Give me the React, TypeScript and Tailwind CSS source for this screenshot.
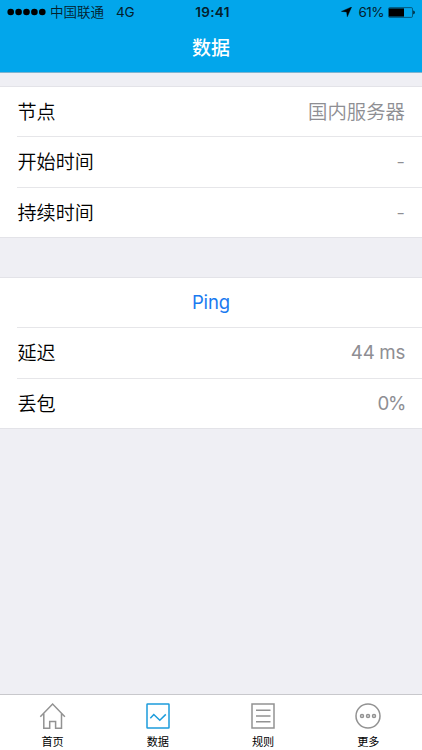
import type { ReactNode } from 'react';

type RowProps = {
  label: string;
  value: string;
  className?: string;
  valueClass?: string;
};

function Row({
  label,
  value,
  className = 'h-[51px] border-b',
  valueClass = 'text-[19.4px] font-[350]',
}: RowProps) {
  return (
    <div className="pl-[17px]">
      <div className={`flex items-center justify-between border-[#e6e6e9] pr-[17px] ${className}`}>
        <span className="pl-[0.5px] text-[19.1px] font-[350] leading-6 text-black">{label}</span>
        <span className={`leading-6 text-[#8e8e93] ${valueClass}`}>{value}</span>
      </div>
    </div>
  );
}

function StatusBar() {
  return (
    <div className="grid h-6 grid-cols-3 items-center text-[13.5px] leading-6 text-[#04202c]">
      <div className="flex items-center whitespace-nowrap pl-[7px]">
        <svg className="mr-1 h-2 w-[39px]" viewBox="0 0 39 8" fill="#000">
          {[3.7, 11.6, 19.5, 27.4, 35.3].map((cx) => (
            <circle key={cx} cx={cx} cy="4" r="3.3" />
          ))}
        </svg>
        <span className="font-[350]">中国联通</span>
        <span className="ml-3 tracking-[-0.2px]">4G</span>
      </div>
      <div className="pl-[3px] text-center font-semibold tracking-[0.3px]">19:41</div>
      <div className="flex items-center justify-end pr-[7px]">
        <svg className="mr-[6px] h-[10px] w-[11px]" viewBox="0 0 11 10" fill="#000">
          <path d="M10.6 0 6.3 9.8 5.6 4.9 0.4 4.4z" stroke="#000" strokeWidth="0.4" />
        </svg>
        <span className="tracking-[-0.5px]">61%</span>
        <svg className="ml-[4px] h-[11px] w-[27px]" viewBox="0 0 27 11" fill="none">
          <rect x="0.5" y="0.6" width="24" height="9.8" rx="1.2" stroke="#053a50" strokeWidth="0.7" />
          <rect x="1" y="1.4" width="15" height="8.2" fill="#000" />
          <path d="M25.4 3.6c1.7.5 1.7 3.3 0 3.8z" fill="#000" />
        </svg>
      </div>
    </div>
  );
}

function Tab({ label, children }: { label: string; children: ReactNode }) {
  return (
    <div className="flex flex-1 flex-col items-center pt-[7px]">
      <svg
        className="h-7 w-7"
        viewBox="0 0 28 28"
        fill="none"
        stroke="#929292"
        strokeWidth="1.5"
      >
        {children}
      </svg>
      <span className="mt-[4px] text-[11.2px] leading-4 text-black">{label}</span>
    </div>
  );
}

export default function App() {
  return (
    <div className="flex h-[750px] w-[422px] flex-col overflow-hidden bg-[#efeff4] font-['Inter','Noto_Sans_CJK_SC',sans-serif]">
      <header className="h-[73px] border-b border-[#7fb4cf] bg-[#02a6eb]">
        <StatusBar />
        <h1 className="pt-[11px] text-center text-[19px] font-medium leading-7 text-white">数据</h1>
      </header>

      <section className="mt-[13px] border-y border-[#e3e3e8] bg-white">
        <Row label="节点" value="国内服务器" className="h-[50px] border-b" />
        <Row label="开始时间" value="-" />
        <Row label="持续时间" value="-" className="h-[49px]" />
      </section>

      <section className="mt-[39px] border-y border-[#e3e3e8] bg-white">
        <div className="pl-[17px]">
          <button className="block h-[50px] w-full border-b border-[#e6e6e9] pb-0.5 pr-[17px] text-[18.5px] leading-6 tracking-[-0.1px] text-[#1a7af0]">
            Ping
          </button>
        </div>
        <Row label="延迟" value="44 ms" valueClass="text-[18.7px] tracking-[-0.3px]" />
        <Row label="丢包" value="0%" className="h-[49px]" valueClass="text-[18.7px] tracking-[-1.3px]" />
      </section>

      <nav className="mt-auto flex h-14 border-t border-[#c8c8cc] bg-white pr-px">
        <Tab label="首页">
          <path d="M1.3 14.7 13.6 2l12.3 12.7M4.8 11.8v14.4h5.9v-6.7h5.9v6.7h5.9V11.8" />
        </Tab>
        <Tab label="数据">
          <g stroke="#1c9cdc">
            <rect x="3" y="2" width="22" height="24" rx="0.5" />
            <path d="m6.3 16.2 3.5-3.7 6 5.7 6-5.8" />
          </g>
        </Tab>
        <Tab label="规则">
          <rect x="3" y="2" width="22" height="24" />
          <path d="M7 8.2h14.5M7 14h14.5M7 19.8h14.5" />
        </Tab>
        <Tab label="更多">
          <circle cx="14" cy="14" r="12" />
          <circle cx="8" cy="14" r="1.5" />
          <circle cx="14" cy="14" r="1.5" />
          <circle cx="20" cy="14" r="1.5" />
        </Tab>
      </nav>
    </div>
  );
}
